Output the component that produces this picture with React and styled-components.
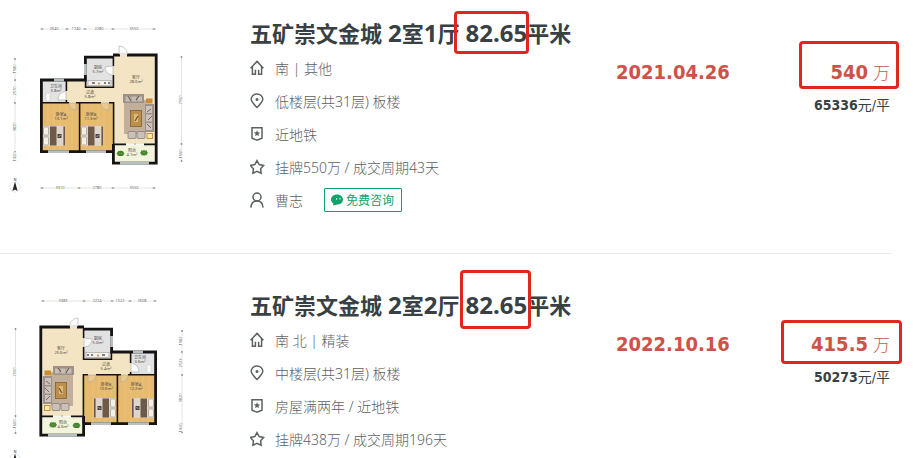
import React from 'react';
import styled, { createGlobalStyle } from 'styled-components';

const palette = {
    title: '#394043',
    text: '#5c6164',
    line: '#ebebeb',
    price: '#cf5148',
    mark: '#e1261d',
    green: '#0fa36b'
};

const sans = `'Noto Sans', 'Noto Sans CJK SC', sans-serif`;
const numeric = `'DejaVu Sans Condensed', 'Noto Sans CJK SC', sans-serif`;

const GlobalStyle = createGlobalStyle`
    * {
        box-sizing: border-box;
    }

    body {
        margin: 0;
        background: white;
        font-family: ${sans};
    }
`;

const Page = styled.main`
    height: 100vh;
    overflow: hidden;
    padding-right: 21px;
`;

const List = styled.ul`
    list-style: none;
    margin: 0;
    padding: 0;
`;

const Item = styled.li`
    display: flex;
    align-items: flex-start;
    padding: 36px 0 37px;
    border-bottom: 1px solid ${palette.line};

    &:first-child {
        padding-top: 18px;
    }

    &:last-child {
        border-bottom: none;
    }
`;

const PlanLink = styled.a`
    flex: none;
    width: 250px;
    height: 165px;

    & svg {
        display: block;
        overflow: visible;
    }
`;

const Info = styled.div`
    flex: 1;
    min-width: 0;
`;

const Title = styled.h2`
    margin: 0 0 3px;
    font-size: 22px;
    line-height: 30px;
    font-weight: bold;
    white-space: nowrap;
`;

const TitleLink = styled.a`
    display: flex;
    gap: 6px;
    color: ${palette.title};
    text-decoration: none;
`;

const Digits = styled.span`
    font-size: 24px;
`;

const Marked = styled.span`
    position: relative;
    display: inline-block;
`;

const Mark = styled.span`
    position: absolute;
    inset: ${props => props.$inset};
    border: 3px solid ${palette.mark};
    border-radius: 4px;
    pointer-events: none;
`;

const Row = styled.div`
    display: flex;
    align-items: center;
    height: 33px;
    font-size: 14px;
    font-weight: 300;
    color: ${palette.text};
    white-space: nowrap;

    & > svg {
        flex: none;
        margin-right: 10px;
    }
`;

const ChatButton = styled.button`
    display: flex;
    align-items: center;
    gap: 3px;
    height: 24px;
    margin-left: 21px;
    padding: 0 7px 0 6px;
    border: 1px solid ${palette.green};
    border-radius: 1px;
    background: white;
    color: ${palette.green};
    font-family: ${sans};
    font-size: 12px;
    cursor: pointer;
`;

const Deal = styled.div`
    flex: none;
    width: 276px;
    display: flex;
    justify-content: space-between;
    margin-top: 39px;
    font-family: ${numeric};
`;

const DealDate = styled.time`
    font-size: 20px;
    line-height: 30px;
    font-weight: bold;
    color: ${palette.price};
`;

const PriceColumn = styled.div`
    display: flex;
    flex-direction: column;
    align-items: flex-end;
    padding-right: 2px;
`;

const Price = styled.div`
    position: relative;
    display: flex;
    align-items: baseline;
    gap: 5px;
    font-size: 17px;
    line-height: 30px;
    font-weight: 300;
    color: ${palette.price};

    & strong {
        font-size: 20px;
        font-weight: bold;
    }
`;

const UnitPrice = styled.div`
    margin-top: 7px;
    font-size: 14px;
    line-height: 20px;
    color: ${palette.title};
`;

const Icon = ({ children }) => (
    <svg width="15" height="16" viewBox="0 0 15 16" fill="none" stroke="#5c6164" strokeWidth="1.5">
        {children}
    </svg>
);

const HouseIcon = () => (
    <Icon>
        <path d="M0.6 8.2 L7 1.4 L13.4 8.2 M2.4 6.6 V14.2 H5.4 V9.8 M8.6 9.8 V14.2 H11.6 V6.6" />
    </Icon>
);

const PinIcon = () => (
    <Icon>
        <path d="M7 14.4 C3.4 10.8 1.2 8.8 1.2 6.3 A5.8 5.4 0 0 1 12.8 6.3 C12.8 8.8 10.6 10.8 7 14.4 Z" />
        <circle cx="7" cy="6.6" r="1.5" fill="#5c6164" stroke="none" />
    </Icon>
);

const TagIcon = () => (
    <Icon>
        <path d="M2 1.8 H12 V12.2 L7 14.2 L2 12.2 Z" />
        <path
            d="M7 4.2 L7.9 6.3 L10.1 6.5 L8.4 8 L8.9 10.2 L7 9 L5.1 10.2 L5.6 8 L3.9 6.5 L6.1 6.3 Z"
            fill="#5c6164"
            stroke="none"
        />
    </Icon>
);

const StarIcon = () => (
    <Icon>
        <path d="M7 1.6 L9.2 5.6 L13.6 6.4 L10.6 9.7 L11.1 14.2 L7 12.4 L2.9 14.2 L3.4 9.7 L0.4 6.4 L4.8 5.6 Z" />
    </Icon>
);

const UserIcon = () => (
    <Icon>
        <circle cx="7" cy="5" r="4" />
        <path d="M1 15.6 C1.2 11.4 3.4 9 7 9 C10.6 9 12.8 11.4 13 15.6" />
    </Icon>
);

const ChatIcon = () => (
    <svg width="12" height="12" viewBox="0 0 12 12">
        <path
            d="M6 0.4 C9.4 0.4 12 2.6 12 5.5 C12 8.4 9.4 10.6 6 10.6 L2 11.6 L2.4 9.6 C0.9 8.6 0 7.2 0 5.5 C0 2.6 2.6 0.4 6 0.4 Z"
            fill={palette.green}
        />
        <path d="M5.6 4 V5.6 M9 4 V5.6" stroke="white" strokeWidth="1" />
    </svg>
);

const Bed = ({ x }) => (
    <g transform={`translate(${x} 126)`}>
        <rect width="22" height="20" fill="#ddd5ca" />
        <rect x="0.5" y="1" width="5" height="8" rx="1" fill="#f3efe9" stroke="#9c8d7c" strokeWidth="0.6" />
        <rect x="0.5" y="11" width="5" height="8" rx="1" fill="#f3efe9" stroke="#9c8d7c" strokeWidth="0.6" />
        <rect x="7" y="0.5" width="6.5" height="19" fill="#6d5a4b" />
        <rect x="20.4" y="0.5" width="1.6" height="19" fill="#6d5a4b" />
        <path d="M14.5 8 h4 v4 h-4 z" fill="#4a4341" />
        <path d="M15.6 11 l2 -2" stroke="#ddd5ca" strokeWidth="0.7" />
    </g>
);

const Plant = ({ x, y }) => (
    <g transform={`translate(${x} ${y})`}>
        <ellipse rx="3.4" ry="2.6" fill="#3f7d2c" />
        <path d="M-4 0 H4 M-2.5 -2.5 L2.5 2.5 M-2.5 2.5 L2.5 -2.5" stroke="#5b9440" strokeWidth="0.8" />
    </g>
);

const Arrows = ({ d, points, vertical }) => (
    <g>
        <path d={d} stroke="#c9c9c9" strokeWidth="0.5" />
        {points.map(p =>
            vertical ? (
                <circle key={p.join()} cx={p[0]} cy={p[1]} r="0.9" fill="#8c8c8c" />
            ) : (
                <path key={p.join()} d={`M${p[0] - 1.5} ${p[1]} h3 M${p[0]} ${p[1] - 1} v2`} stroke="#8c8c8c" strokeWidth="0.7" />
            )
        )}
    </g>
);

const FloorPlan = ({ mirrored, rooms, sizes, sideSizes }) => (
    <svg width="200" height="180" viewBox="0 18 200 180" role="img" aria-label="户型图">
        <g transform={mirrored ? 'translate(197 0) scale(-1 1)' : undefined}>
            {/* floors */}
            <rect x="113" y="55" width="43" height="90" fill="#f3e5c3" />
            <rect x="66" y="80" width="48" height="24" fill="#f3e5c3" />
            <rect x="86" y="58" width="27" height="28" fill="#e2e2e3" />
            <rect x="42" y="80" width="24" height="23" fill="#e2e2e3" />
            <rect x="42" y="103" width="37" height="48" fill="#e6bb70" />
            <rect x="80" y="103" width="33" height="48" fill="#e6bb70" />
            <path d="M48 104 V150 M54 104 V150 M60 104 V150 M66 104 V150 M72 104 V150 M86 104 V150 M92 104 V150 M98 104 V150 M104 104 V150" stroke="#edc684" strokeWidth="0.6" />
            <rect x="114" y="145" width="42" height="18" fill="#f3f4dc" />

            {/* walls */}
            <g fill="none" stroke="#151313" strokeWidth="2.8">
                <path d="M120 55 H113 M127 55 H156.2 V163.2 H113.4 V144" />
                <path d="M114 57.2 H85.4 V80 H41.4 V151.6 H113" />
            </g>
            <g fill="none" stroke="#151313" strokeWidth="1.6">
                <path d="M113.4 57 V66 M113.4 75 V87.2 H85.6 V79 M66.4 80 V91 M66.4 100 V103 M42 102.8 H69 M76 102.8 H101 M109 102.8 H113.6 V151 M79.6 103 V151" />
                <path d="M114 144.4 H126 M144 144.4 H155" />
            </g>
            <path d="M126 144.4 H144" stroke="#f7f7f3" strokeWidth="1.2" />
            <path d="M135 143 V145" stroke="#8a8272" strokeWidth="0.7" />

            {/* windows */}
            <g stroke="#b9bec0" strokeWidth="2.8">
                <path d="M54 80 H64 M85.4 64 V75 M48 151.6 H69 M86 151.6 H106 M120 163.4 H149" />
            </g>

            {/* doors */}
            <g fill="#fbfbfb" stroke="#aaa8a4" strokeWidth="0.6">
                <path d="M119 54 V46 C123 46 127 49 127.5 54 Z" />
                <path d="M113 66 V75 C108 75 105 71 105 67 Z" />
                <path d="M66 91 V100 H58 C58 95 61 92 66 91 Z" />
                <path d="M69 103 H76 V110 C72 110 69 107 69 103 Z" fill="#edc98c" />
                <path d="M101 103 H109 V110 C104 110 101 107 101 103 Z" fill="#edc98c" />
            </g>

            {/* kitchen and bathroom */}
            <rect x="88" y="80.4" width="23" height="5" fill="#f3f2ef" stroke="#9d9a96" strokeWidth="0.6" />
            <path d="M92 83 h3 M104 83 h2 M108 83 h2" stroke="#5d5a58" strokeWidth="1.4" />
            <circle cx="99" cy="83.6" r="1.1" fill="#d2913d" />
            <rect x="46" y="93" width="4" height="8" rx="1" fill="#fafafa" stroke="#bbb" strokeWidth="0.4" />

            {/* living room */}
            <rect x="124" y="100" width="22" height="34" fill="#c1af9b" />
            <path d="M123 94 h21 v9 h-21 z" fill="#9d9189" />
            <path d="M125.5 96.5 h5 v5 h-5 z M131.5 96.5 h5 v5 h-5 z M137.5 96.5 h4.5 v5 h-4.5 z" fill="#c6bdb5" />
            <path d="M128 96 l3 5 M136 100 l3 -4" stroke="#5e534d" strokeWidth="1" />
            <path d="M145 104 h9 v28 h-9 z" fill="#9d9189" />
            <path d="M146 106 h6 v7 h-6 z M146 114.5 h6 v7 h-6 z M146 123 h6 v7 h-6 z" fill="#cbc4bd" />
            <path d="M147 112 l4 -3 M148 120 l4 -4 M147 124 l4 4" stroke="#6b605a" strokeWidth="0.9" />
            <rect x="130.5" y="110.5" width="11" height="16" fill="#bd8f4c" stroke="#7e6132" strokeWidth="0.8" />
            <path d="M134 114 h4 v8 h-4 z" fill="#ddbb7c" />
            <path d="M135 121 l3 -5" stroke="#69512d" strokeWidth="1.2" />
            <rect x="128" y="131.5" width="8" height="7" rx="1" fill="#c9c1ba" stroke="#81766e" strokeWidth="0.7" />
            <rect x="137" y="131.5" width="8" height="7" rx="1" fill="#c9c1ba" stroke="#81766e" strokeWidth="0.7" />
            <rect x="146" y="98.5" width="6.5" height="5" fill="#c98c35" />
            <rect x="147" y="133.5" width="5.5" height="5" fill="#ffeaa7" stroke="#bd8734" strokeWidth="0.9" />

            <Bed x={43} />
            <Bed x={81} />
            <Plant x={120.5} y={153.4} />
            <Plant x={144} y={152.8} />

            {/* dimension lines */}
            <Arrows d="M41 29 H155" points={[[42, 29], [67, 29], [85, 29], [113, 29], [154, 29]]} />
            <Arrows d="M41 188 H155" points={[[42, 188], [79, 188], [113, 188], [154, 188]]} />
            <Arrows vertical d="M15 58 V162" points={[[15, 59], [15, 80], [15, 103], [15, 152], [15, 160]]} />
            <Arrows vertical d="M181.5 56 V162" points={[[181.5, 57], [181.5, 144], [181.5, 161]]} />
        </g>

        <g fontSize="4" textAnchor="middle" fill="#4f4941" fontFamily={sans}>
            {rooms.map(([name, size, x, y]) => (
                <React.Fragment key={name}>
                    <text x={x} y={y}>
                        {name}
                    </text>
                    <text x={x} y={y + 4}>
                        {size}
                    </text>
                </React.Fragment>
            ))}
        </g>
        <g fontSize="4" textAnchor="middle" fill="#666" stroke="white" strokeWidth="1.4" paintOrder="stroke" fontFamily={sans}>
            {sizes.map(([size, x, y]) => (
                <text key={`${x}-${y}`} x={x} y={y + 1}>
                    {size}
                </text>
            ))}
            {sideSizes.map(([size, x, y]) => (
                <text key={`${x}-${y}`} transform={`translate(${x + 1} ${y}) rotate(-90)`}>
                    {size}
                </text>
            ))}
        </g>

        {/* north arrow */}
        <circle cx="15" cy="187" r="5.2" fill="none" stroke="#d0d0d0" strokeWidth="0.5" />
        <path d="M15 181.5 L17.6 191 L15 189.4 L12.4 191 Z" fill="#222" />
        <text x="15" y="180.6" fontSize="4" textAnchor="middle" fill="#333" fontFamily={sans}>
            N
        </text>
    </svg>
);

const listings = [
    {
        id: 1,
        community: '五矿崇文金城',
        layout: [2, 1],
        area: '82.65',
        areaMark: '-7px -2px -6px -12px',
        facing: '南 | 其他',
        floor: '低楼层(共31层) 板楼',
        tags: '近地铁',
        cycle: '挂牌550万 / 成交周期43天',
        agent: '曹志',
        date: '2021.04.26',
        price: '540',
        priceMark: '-16px -9px -1px -31px',
        unitPrice: '65336',
        plan: {
            rooms: [
                ['厨房', '5.7m²', 98, 69],
                ['客厅', '28.0m²', 136, 79],
                ['卫生间', '3.8m²', 56, 88],
                ['过道', '5.8m²', 90, 94],
                ['卧室A', '13.1m²', 61, 116],
                ['卧室B', '11.3m²', 91, 116],
                ['阳台', '4.1m²', 132, 152]
            ],
            sizes: [
                ['2640', 54, 29],
                ['1740', 76, 29],
                ['2280', 99, 29],
                ['3550', 134, 29],
                ['3310', 60, 188],
                ['2780', 97, 188],
                ['3550', 134, 188]
            ],
            sideSizes: [
                ['1980', 15, 69],
                ['2170', 15, 91],
                ['3820', 15, 127],
                ['1320', 15, 157],
                ['7150', 181, 100],
                ['1550', 181, 154]
            ]
        }
    },
    {
        id: 2,
        community: '五矿崇文金城',
        layout: [2, 2],
        area: '82.65',
        areaMark: '-20px -4px -9px -6px',
        facing: '南 北 | 精装',
        floor: '中楼层(共31层) 板楼',
        tags: '房屋满两年 / 近地铁',
        cycle: '挂牌438万 / 成交周期196天',
        date: '2022.10.16',
        price: '415.5',
        priceMark: '-9px -12px -4px -30px',
        unitPrice: '50273',
        plan: {
            mirrored: true,
            rooms: [
                ['厨房', '5.0m²', 98, 68],
                ['客厅', '25.6m²', 61, 78],
                ['卫生间', '3.6m²', 140, 87],
                ['过道', '5.4m²', 106, 94],
                ['卧室B', '10.6m²', 106, 114],
                ['卧室A', '12.2m²', 136, 114],
                ['阳台', '4.6m²', 63, 152]
            ],
            sizes: [
                ['3383', 63, 29],
                ['2224', 97, 29],
                ['1522', 120, 29],
                ['2608', 142, 29]
            ],
            sideSizes: [
                ['7000', 15, 100],
                ['1600', 15, 152],
                ['1982', 181, 69],
                ['2123', 181, 91],
                ['3820', 181, 126],
                ['1320', 181, 156]
            ]
        }
    }
];

const Listing = ({ item }) => (
    <Item>
        <PlanLink href="#" aria-label={item.community}>
            <FloorPlan {...item.plan} />
        </PlanLink>
        <Info>
            <Title>
                <TitleLink href="#">
                    <span>{item.community}</span>
                    <span>
                        <Digits>{item.layout[0]}</Digits>室<Digits>{item.layout[1]}</Digits>厅
                    </span>
                    <span>
                        <Marked>
                            <Digits>{item.area}</Digits>
                            <Mark $inset={item.areaMark} />
                        </Marked>
                        平米
                    </span>
                </TitleLink>
            </Title>
            <Row>
                <HouseIcon />
                {item.facing}
            </Row>
            <Row>
                <PinIcon />
                {item.floor}
            </Row>
            <Row>
                <TagIcon />
                {item.tags}
            </Row>
            <Row>
                <StarIcon />
                {item.cycle}
            </Row>
            {item.agent && (
                <Row>
                    <UserIcon />
                    {item.agent}
                    <ChatButton type="button">
                        <ChatIcon />
                        免费咨询
                    </ChatButton>
                </Row>
            )}
        </Info>
        <Deal>
            <DealDate>{item.date}</DealDate>
            <PriceColumn>
                <Price>
                    <strong>{item.price}</strong>
                    万
                    <Mark $inset={item.priceMark} />
                </Price>
                <UnitPrice>
                    <strong>{item.unitPrice}</strong>元/平
                </UnitPrice>
            </PriceColumn>
        </Deal>
    </Item>
);

const App = () => (
    <>
        <GlobalStyle />
        <Page>
            <List>
                {listings.map(item => (
                    <Listing key={item.id} item={item} />
                ))}
            </List>
        </Page>
    </>
);

export default App;
